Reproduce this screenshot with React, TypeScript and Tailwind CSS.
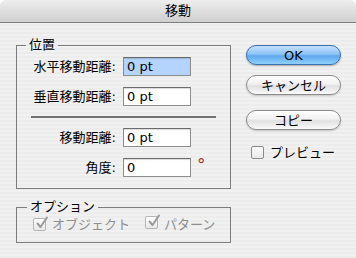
import React from "react";

const FONT = "font-['DejaVu_Sans','Noto_Sans_CJK_JP',sans-serif]";

function Field({ label, value, focused }: { label: string; value: string; focused?: boolean }) {
  return (
    <div className="flex h-[19px] items-center">
      <span className="w-[100px] pr-[1px] text-right text-[13px] leading-[19px] text-black">{label}</span>
      <div
        className={`ml-[6px] h-[19px] w-[68px] border border-[#8d8d8d] border-t-[#6b6b6b] pl-[3px] text-[13px] leading-[17px] text-black shadow-[inset_0_1px_1px_rgba(0,0,0,0.15)] ${
          focused ? "bg-[#b5d4fd]" : "bg-white"
        }`}
      >
        {value}
      </div>
    </div>
  );
}

function AquaCheck({ checked, disabled }: { checked?: boolean; disabled?: boolean }) {
  return (
    <span
      className={`relative inline-block h-[13px] w-[13px] rounded-[2px] border bg-gradient-to-b from-white to-[#e8e8e8] ${
        disabled ? "border-[#b4b4b4]" : "border-[#8a8a8a]"
      }`}
    >
      {checked && (
        <svg viewBox="0 0 14 14" className="absolute left-[1px] top-[-3px] h-[14px] w-[14px]">
          <path
            d="M2.5 7.5 L5.5 11 L12 1.5"
            fill="none"
            stroke={disabled ? "#9a9a9a" : "#222"}
            strokeWidth="2"
            strokeLinecap="round"
            strokeLinejoin="round"
          />
        </svg>
      )}
    </span>
  );
}

function Button({ children, primary }: { children: React.ReactNode; primary?: boolean }) {
  return (
    <div
      className={`flex h-[20px] w-[95px] items-center justify-center rounded-full border text-[13px] leading-none text-black ${
        primary
          ? "border-[#3a6fb0] bg-[linear-gradient(to_bottom,#c4e0fb_0%,#8ec4f6_45%,#5fa8ef_55%,#8fd0fb_100%)] shadow-[0_1px_2px_rgba(0,0,0,0.3)]"
          : "border-[#8c8c8c] bg-[linear-gradient(to_bottom,#ffffff_0%,#f1f1f1_45%,#e0e0e0_55%,#fafafa_100%)] shadow-[0_1px_2px_rgba(0,0,0,0.2)]"
      }`}
    >
      {children}
    </div>
  );
}

export default function App() {
  return (
    <div className={`h-[258px] w-[356px] bg-white ${FONT}`}>
      <div className="flex h-full flex-col overflow-hidden rounded-t-[6px] bg-[repeating-linear-gradient(to_bottom,#ececec_0px,#ececec_2px,#f1f1f1_2px,#f1f1f1_4px)]">
        {/* title bar */}
        <div className="flex h-[23px] shrink-0 items-center justify-center border-b border-[#7d7d7d] bg-gradient-to-b from-[#eeeeee] to-[#cfcfcf] text-[13px] text-black">
          移動
        </div>

        <div className="flex pl-[16px] pt-[14px]">
          {/* left column */}
          <div className="flex w-[215px] flex-col">
            <fieldset className="h-[152px] border border-[#7c7c7c] px-0 pb-0 pt-[4px]">
              <legend className="ml-[9px] px-[3px] text-[13px] leading-[16px] text-black">位置</legend>
              <div className="flex flex-col">
                <Field label="水平移動距離:" value="0 pt" focused />
                <div className="mt-[11px]">
                  <Field label="垂直移動距離:" value="0 pt" />
                </div>
                <div className="ml-[14px] mt-[10px] h-[2px] w-[185px] bg-[#727272]" />
                <div className="mt-[10px]">
                  <Field label="移動距離:" value="0 pt" />
                </div>
                <div className="mt-[11px] flex items-center">
                  <Field label="角度:" value="0" />
                  <span className="ml-[6px] -mt-[4px] text-[17px] leading-none text-[#a3322b]">°</span>
                </div>
              </div>
            </fieldset>

            <fieldset className="mt-[10px] h-[44px] border border-[#7c7c7c] px-0 pb-0 pt-[1px]">
              <legend className="ml-[10px] px-[3px] text-[13px] leading-[16px] text-black">オプション</legend>
              <div className="flex items-center pl-[16px] text-[13px] leading-[15px] text-[#8e8e8e]">
                <AquaCheck checked disabled />
                <span className="ml-[6px]">オブジェクト</span>
                <span className="ml-[15px]">
                  <AquaCheck checked disabled />
                </span>
                <span className="ml-[6px]">パターン</span>
              </div>
            </fieldset>
          </div>

          {/* right column */}
          <div className="ml-[15px] flex flex-col pt-[8px]">
            <Button primary>OK</Button>
            <div className="mt-[10px]">
              <Button>キャンセル</Button>
            </div>
            <div className="mt-[15px]">
              <Button>コピー</Button>
            </div>
            <div className="ml-[5px] mt-[15px] flex items-center">
              <AquaCheck />
              <span className="ml-[6px] text-[13px] leading-[15px] text-black">プレビュー</span>
            </div>
          </div>
        </div>
      </div>
    </div>
  );
}
